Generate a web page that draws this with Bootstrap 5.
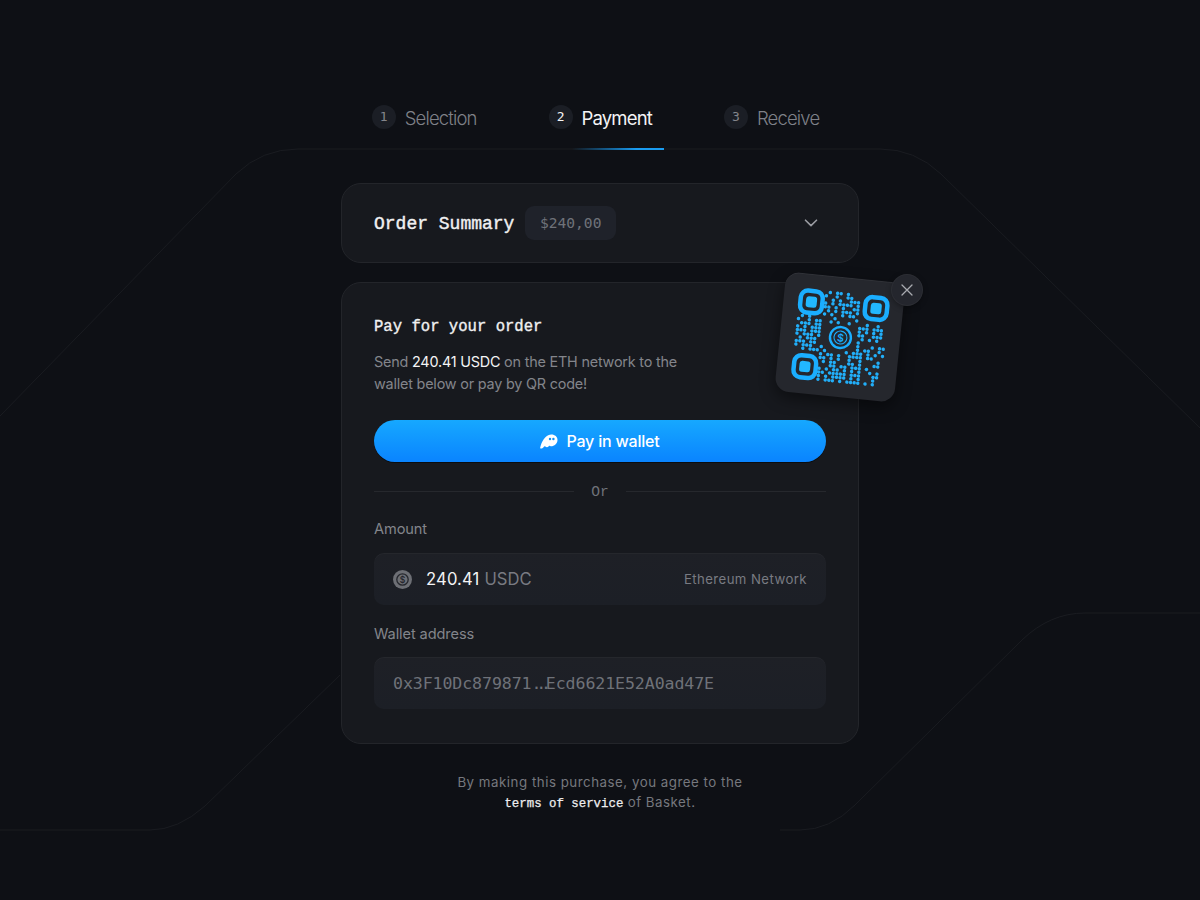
<!doctype html>
<html lang="en">
<head>
<meta charset="utf-8">
<title>Payment</title>
<link href="https://cdn.jsdelivr.net/npm/bootstrap@5.3.0/dist/css/bootstrap.min.css" rel="stylesheet">
<style>
html,body{height:100%}
body{background:#0e1015;color:#83858b;font-family:Inter,"Liberation Sans",sans-serif;position:relative;overflow:hidden}
.bg-lines{position:absolute;left:0;top:0;width:1200px;height:900px;z-index:0}
.pay-wrap{position:relative;z-index:1;width:518px;margin:0 auto;padding-top:105px}
.step-row{height:24px;gap:72px;padding-right:9px;margin-bottom:54px}
.step-num{width:24px;height:24px;background:#1b1e25;color:#83858b;font:13px/24px "DejaVu Sans Mono",monospace;text-align:center;margin-right:9px}
.step-name{font-size:18.5px;font-weight:300;letter-spacing:-.85px;line-height:24px;color:#7f8188;position:relative;top:1px}
.step-on .step-num{color:#f4f4f5}
.step-on .step-name{color:#f4f4f5;font-weight:400}
.panel-box{background:#17191e;border:1px solid #23252a;border-radius:20px;color:#83858b}
.sum-box{height:80px;padding:0 32px;margin-bottom:19px}
.sum-title{font:400 18px/24px "Liberation Mono",monospace;-webkit-text-stroke:.4px #f0f0f1;color:#f0f0f1;padding-top:2px}
.price-tag{background:#1f222a;border-radius:9px;color:#6f7279;font:400 14.6px/34px "DejaVu Sans Mono",monospace;padding:0 14.500px;margin-left:11px;height:34px}
.pay-box{padding:33px 32px 34px;position:relative}
.pay-title{font:400 15.6px/22px "Liberation Mono",monospace;-webkit-text-stroke:.35px #f0f0f1;color:#f0f0f1;margin:0 0 13px}
.pay-text{font-size:14.4px;line-height:21.5px;letter-spacing:-.2px;margin:0 0 26px;width:330px}
.pay-text b{font-weight:400;color:#f4f4f5}
.wallet-btn{height:42px;width:100%;border:0;border-radius:21px;background:linear-gradient(180deg,#16a8ff,#0a84ff);color:#fff;font-size:16px;font-weight:500;letter-spacing:-.2px;box-shadow:0 1px 0 rgba(0,0,0,.5);padding:0;margin-bottom:19px}
.wallet-btn:hover{background:linear-gradient(180deg,#16a8ff,#0a84ff);color:#fff}
.or-row{height:20px;gap:17px;font:14.6px/20px "Liberation Mono",monospace;color:#6f7279;margin-bottom:17px}
.or-mid{padding-top:2px}
.or-rule{height:1px;background:#26282d}
.field-label{font-size:14.6px;line-height:22px;letter-spacing:-.1px;margin-bottom:13px;color:#83858b}
.label-tight{margin-bottom:12px}
.field-box{height:52px;background:linear-gradient(180deg,#1e2026,#1c1f26);border-radius:10px;padding:0 19px;box-shadow:inset 0 1px 0 rgba(255,255,255,.03)}
.gap-after{margin-bottom:18px}
.amt-num{font:400 16.6px/22px "Inter",sans-serif;letter-spacing:.15px;color:#f4f4f5;margin-left:14px}
.amt-unit{font-size:16.6px;line-height:22px;color:#797b82;margin-left:5px}
.net-name{font-size:13.2px;letter-spacing:.43px;color:#797b82;padding-top:1px}
.addr-text{font:400 16.6px/22px "DejaVu Sans Mono",monospace;color:#6f7279;letter-spacing:-.1px;padding-top:2px}
.addr-dots{letter-spacing:-5.2px}
.qr-tile{position:absolute;left:438px;top:-6px;width:120px;height:120px;background:#25272d;border-radius:14px;transform:rotate(5.8deg);box-shadow:0 6px 16px rgba(0,0,0,.45),inset 0 1px 0 rgba(255,255,255,.05)}
.qr-close{position:absolute;left:550px;top:-8px;width:30px;height:30px;background:#24262d;box-shadow:0 0 0 1px #2c2e34,0 2px 6px rgba(0,0,0,.4)}
.legal-text{margin-top:28px;text-align:center;font-size:13.3px;line-height:20px;letter-spacing:.52px;color:#76787e}
.legal-text b{font:400 12.4px/20px "Liberation Mono",monospace;-webkit-text-stroke:.25px #eeeeef;color:#eeeeef;letter-spacing:0}
</style>
</head>
<body>
<svg class="bg-lines" viewBox="0 0 1200 900" fill="none" aria-hidden="true">
  <defs><linearGradient id="act" x1="0" x2="1"><stop offset="0" stop-color="#0d8fe8" stop-opacity="0"/><stop offset=".7" stop-color="#1a9cf0"/><stop offset="1" stop-color="#1a9cf0"/></linearGradient></defs>
  <path d="M0 416 236 174Q262 149 298 149H880Q915 149 941 174L1200 428" stroke="#1a1c21"/>
  <path d="M0 830H150Q178 830 205 806L340 675" stroke="#1a1c21"/>
  <path d="M780 830H800Q830 830 855 805L1022 640Q1050 613 1085 613H1200" stroke="#1a1c21"/>
  <rect x="572" y="148" width="92" height="2" fill="url(#act)"/>
</svg>
<main class="pay-wrap">
  <div class="d-flex justify-content-center step-row">
    <div class="d-flex align-items-center"><span class="step-num rounded-circle">1</span><span class="step-name">Selection</span></div>
    <div class="d-flex align-items-center step-on"><span class="step-num rounded-circle">2</span><span class="step-name">Payment</span></div>
    <div class="d-flex align-items-center"><span class="step-num rounded-circle">3</span><span class="step-name">Receive</span></div>
  </div>

  <section class="panel-box sum-box d-flex align-items-center">
    <span class="sum-title">Order Summary</span>
    <span class="price-tag">$240,00</span>
    <svg class="ms-auto me-2" width="14" height="8" viewBox="0 0 14 8" fill="none"><path d="M1.500 1.200 7 6.600l5.500-5.400" stroke="#9a9ca2" stroke-width="1.600" stroke-linecap="round" stroke-linejoin="round"/></svg>
  </section>

  <section class="panel-box pay-box">
    <h2 class="pay-title">Pay for your order</h2>
    <p class="pay-text">Send <b>240.41 USDC</b> on the ETH network to the wallet below or pay by QR code!</p>
    <button class="btn wallet-btn d-flex align-items-center justify-content-center" type="button">
      <svg class="me-2" width="18" height="15" viewBox="0 0 18 15"><path fill="#fff" d="M1 14.600c-.7 0-1-.5-.8-1.200C1.500 8.600 4.800 1 11 .6c3.900-.2 6.500 2.400 6.500 5.400 0 3.400-3.200 6.300-6.400 6.300-.8 0-1.100-.5-1.500-.5-.8 0-1.300 1.400-2.700 1.400-1 0-1.300-1-2-1-.9 0-2.200 2.400-3.400 2.400z"/><circle cx="10" cy="5" r="1.200" fill="#1293f5"/><circle cx="13.400" cy="5" r="1.200" fill="#1293f5"/></svg>
      Pay in wallet
    </button>
    <div class="d-flex align-items-center or-row">
      <span class="or-rule flex-grow-1"></span><span class="or-mid">Or</span><span class="or-rule flex-grow-1"></span>
    </div>
    <div class="field-label">Amount</div>
    <div class="field-box d-flex align-items-center gap-after">
      <svg width="19" height="19" viewBox="0 0 19 19"><circle cx="9.500" cy="9.500" r="9.500" fill="#6d6f75"/><circle cx="9.500" cy="9.500" r="5.700" fill="none" stroke="#25272d" stroke-width="1.300"/><text x="9.500" y="12.600" text-anchor="middle" font-size="8.500" font-family="Inter,sans-serif" font-weight="600" fill="#25272d">$</text></svg>
      <span class="amt-num">240.41</span><span class="amt-unit">USDC</span>
      <span class="net-name ms-auto">Ethereum Network</span>
    </div>
    <div class="field-label label-tight">Wallet address</div>
    <div class="field-box d-flex align-items-center"><span class="addr-text">0x3F10Dc879871<span class="addr-dots">...</span>Ecd6621E52A0ad47E</span></div>

    <div class="qr-tile">
      <svg width="120" height="120" viewBox="0 0 120 120" fill="none">
        <g stroke="#1aaeff" stroke-width="4.500">
          <rect x="17" y="17" width="22" height="22" rx="7"/>
          <rect x="82" y="17" width="22" height="22" rx="7"/>
          <rect x="17" y="82" width="22" height="22" rx="7"/>
        </g>
        <g fill="#22b8ff">
          <rect x="22.500" y="22.500" width="11" height="11" rx="2.800"/>
          <rect x="87.500" y="22.500" width="11" height="11" rx="2.800"/>
          <rect x="22.500" y="87.500" width="11" height="11" rx="2.800"/>
        </g>
        <circle cx="60.500" cy="60.500" r="10.500" stroke="#1aaeff" stroke-width="2.400"/>
        <circle cx="60.500" cy="60.500" r="6.500" stroke="#1aaeff" stroke-width="1.100"/>
        <text x="60.500" y="64.500" text-anchor="middle" font-size="10.500" font-family="Inter,sans-serif" font-weight="600" fill="#1aaeff">$</text>
        <g id="qrDots" fill="#22aef8"></g>
      </svg>
    </div>
    <span class="qr-close rounded-circle d-flex align-items-center justify-content-center">
      <svg width="12" height="12" viewBox="0 0 12 12" fill="none"><path d="M1 1l10 10M11 1 1 11" stroke="#a9abb0" stroke-width="1.300" stroke-linecap="round"/></svg>
    </span>
  </section>

  <p class="legal-text">By making this purchase, you agree to the<br><b>terms of service</b> of Basket.</p>
</main>
<script>
var m=[
"........#.##.#...........",
".......#..#..##..........",
".........#.#..###........",
".......#.#.####.#........",
".......##.#.#..##........",
"........#.#.###.#........",
".......#.#..#.##.........",
".#.#......#.....#........",
"#..#.##..#.#..#....#..#..",
".###.##..........###.###.",
"#.#.###..........#.#.#.#.",
"###.###..........##..###.",
"#.###.#...........#.#.#..",
".#.###...........#.......",
"###.##...........#...#.##",
"#.###..#.........#.##..#.",
"..#.###.#.....#.###.#.#.#",
".......#.##.#..####.##...",
".......##.#.#..#..#....#.",
"........#.##...##.#...##.",
"..........##.##.###.#....",
".......#.#.##.#.#.#..#.#.",
".......##.#####.###...##.",
".......#.#.####.#.#...#..",
".......#.###.#.####.#.#.."
];
var g=document.getElementById('qrDots'),s='';
m.forEach(function(r,y){r.split('').forEach(function(c,x){if(c==='#'){s+='<circle cx="'+(16.8+x*3.64).toFixed(1)+'" cy="'+(16.8+y*3.64).toFixed(1)+'" r="1.750"/>';}});});
g.innerHTML=s;
</script>
<script src="https://cdn.jsdelivr.net/npm/bootstrap@5.3.0/dist/js/bootstrap.bundle.min.js"></script>
</body>
</html>
